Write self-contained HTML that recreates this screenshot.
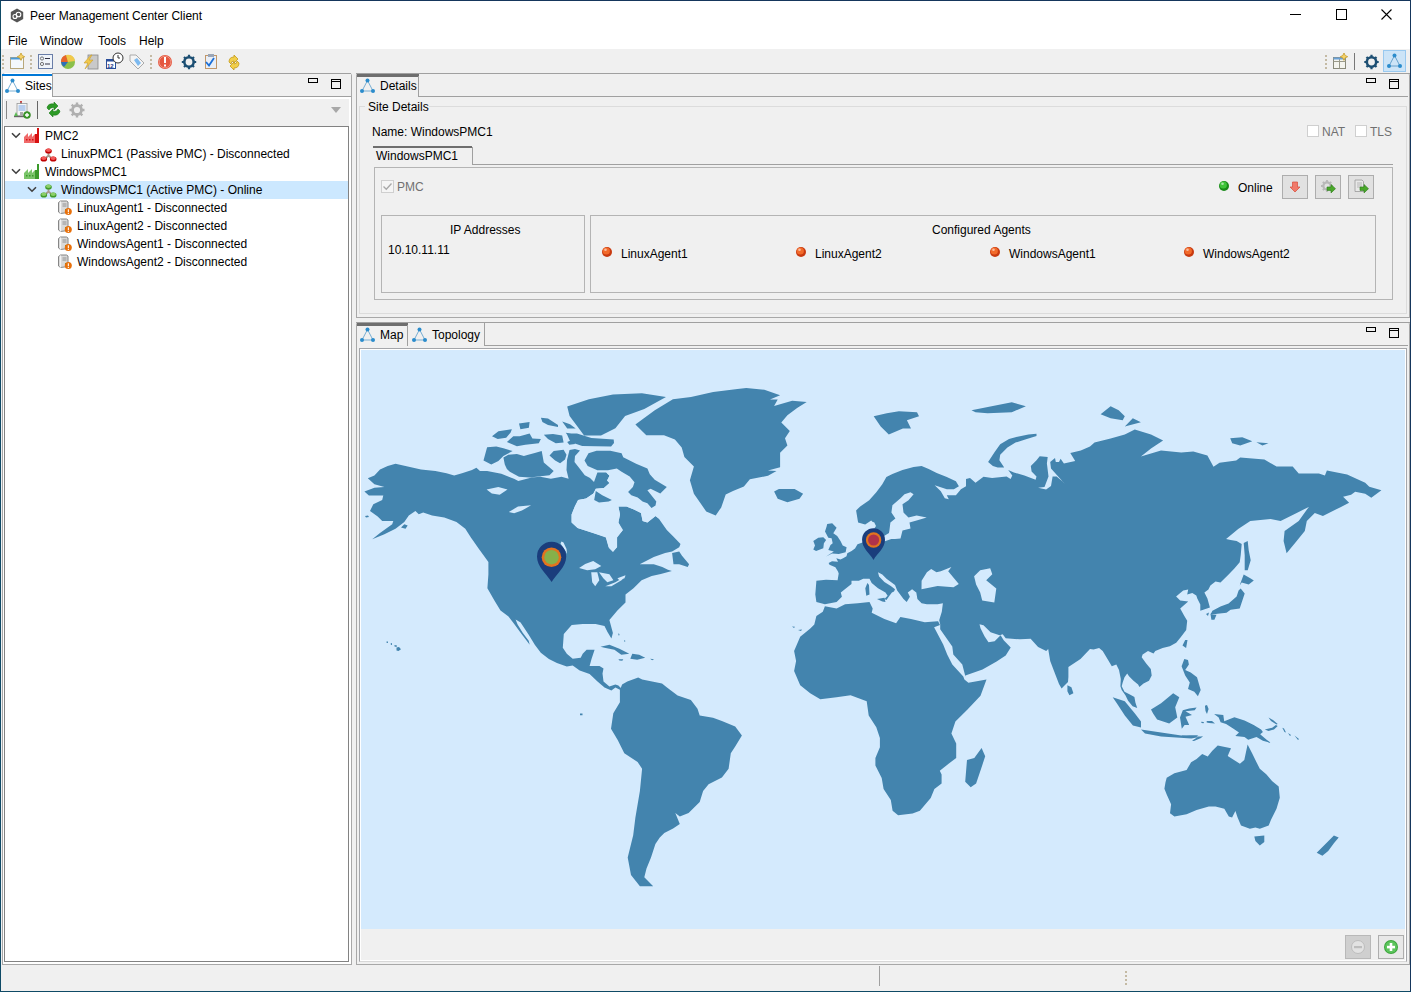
<!DOCTYPE html>
<html><head><meta charset="utf-8">
<style>
html,body{margin:0;padding:0;}
body{width:1411px;height:992px;position:relative;overflow:hidden;background:#f0f0f0;font-family:"Liberation Sans",sans-serif;font-size:12px;color:#000;}
.a{position:absolute;}
.t{position:absolute;white-space:nowrap;line-height:14px;}
.bx{position:absolute;box-sizing:border-box;}
svg{position:absolute;overflow:visible;}
</style></head><body>
<!-- window border -->
<div class="bx" style="left:0;top:0;width:1411px;height:992px;border:1px solid #15365c;border-left-color:#0f4a66;border-bottom-color:#0f4a66;z-index:50;pointer-events:none"></div>
<!-- title bar -->
<div class="a" style="left:0;top:0;width:1411px;height:30px;background:#fff"></div>
<svg style="left:10px;top:8px" width="14" height="15" viewBox="0 0 14 15"><polygon points="7,0.5 13.2,4 13.2,11 7,14.5 0.8,11 0.8,4" fill="#555"/><circle cx="5" cy="8.5" r="2" fill="none" stroke="#fff" stroke-width="1.1"/><circle cx="8.5" cy="6.5" r="2.3" fill="none" stroke="#fff" stroke-width="1.1"/></svg>
<div class="t" style="left:30px;top:9px">Peer Management Center Client</div>
<div class="a" style="left:1290px;top:14px;width:11px;height:1px;background:#000"></div>
<div class="bx" style="left:1336px;top:9px;width:11px;height:11px;border:1px solid #000"></div>
<svg style="left:1381px;top:9px" width="11" height="11"><path d="M0.5 0.5L10.5 10.5M10.5 0.5L0.5 10.5" stroke="#000" stroke-width="1.1"/></svg>
<!-- menu bar -->
<div class="a" style="left:0;top:30px;width:1411px;height:19px;background:#fff"></div>
<div class="t" style="left:8px;top:34px">File</div>
<div class="t" style="left:40px;top:34px">Window</div>
<div class="t" style="left:98px;top:34px">Tools</div>
<div class="t" style="left:139px;top:34px">Help</div>
<!-- toolbar -->

<svg style="left:0;top:50px" width="260" height="22">
 <g fill="#c4baa4"><rect x="2" y="5" width="2" height="2"/><rect x="2" y="9" width="2" height="2"/><rect x="2" y="13" width="2" height="2"/><rect x="2" y="17" width="2" height="2"/>
 <rect x="30" y="5" width="2" height="2"/><rect x="30" y="9" width="2" height="2"/><rect x="30" y="13" width="2" height="2"/><rect x="30" y="17" width="2" height="2"/>
 <rect x="150" y="5" width="2" height="2"/><rect x="150" y="9" width="2" height="2"/><rect x="150" y="13" width="2" height="2"/><rect x="150" y="17" width="2" height="2"/></g>
 <rect x="10.5" y="7.5" width="13" height="11" fill="#f4f8fc" stroke="#b8a77a"/><rect x="10.5" y="7.5" width="11" height="2" fill="#4a9ad8"/><path d="M21 3 l1.2 2.5 2.5 1.2 -2.5 1.2 -1.2 2.5 -1.2 -2.5 -2.5 -1.2 2.5 -1.2z" fill="#f6d36a" stroke="#c49a2a" stroke-width="0.8"/>
 <rect x="38.5" y="4.5" width="14" height="14" fill="#f0f4fa" stroke="#6a7ea8"/><circle cx="42" cy="8.5" r="1.6" fill="none" stroke="#666" stroke-width="0.9"/><circle cx="42" cy="14" r="1.6" fill="none" stroke="#666" stroke-width="0.9"/><path d="M45 8.5h5M45 14h5" stroke="#334" stroke-width="1"/>
 <circle cx="68" cy="12" r="7" fill="#8cc04a"/><path d="M68 12 L61 12 A7 7 0 0 1 66 5z" fill="#e8632a"/><path d="M68 12 L66 5 A7 7 0 0 1 75 11z" fill="#f2c94a"/><path d="M68 12 L61 12 A7 7 0 0 0 64 17z" fill="#2f6fb8"/>
 <rect x="88" y="5" width="10" height="14" fill="#c9c9c9" stroke="#888" stroke-width="0.8"/><path d="M91 5 L84 13 L88 13 L85 19 L93 10 L89 10 L92 5z" fill="#f1c84a" stroke="#c9a030" stroke-width="0.6"/>
 <rect x="106.5" y="9.5" width="9" height="9" fill="#fff" stroke="#2a4f9a"/><rect x="106.5" y="9.5" width="9" height="2" fill="#2a4f9a"/><text x="107" y="17.5" font-size="6" font-family="Liberation Sans" font-weight="bold" fill="#1a3a8a">12</text><circle cx="118" cy="8" r="5" fill="#fff" stroke="#333" stroke-width="1"/><path d="M118 5v3h2" stroke="#333" stroke-width="1" fill="none"/>
 <path d="M130 5 L136 5 L144 13 L138 19 L130 11z" fill="#f4f4f4" stroke="#aaa" stroke-width="1"/><path d="M134 10 L137 8 L141 13 L138 16z" fill="#7cb9ef"/>
 <circle cx="165" cy="12" r="7" fill="#e5573f"/><circle cx="165" cy="12" r="5.8" fill="none" stroke="#f5b3a6" stroke-width="0.6"/><rect x="164" y="7" width="2" height="6" fill="#fff"/><rect x="164" y="14.5" width="2" height="2" fill="#fff"/>
 <g transform="translate(189 12)"><circle r="4.7" fill="none" stroke="#1d4f73" stroke-width="2.6"/><g stroke="#1d4f73" stroke-width="2.2"><path d="M0 -7.2V-4M0 4V7.2M-7.2 0H-4M4 0H7.2M-5 -5L-3 -3M3 3L5 5M-5 5L-3 3M3 -3L5 -5"/></g></g>
 <rect x="205.5" y="5.5" width="11" height="13" fill="#e9eef6" stroke="#c0976a"/><rect x="208" y="4" width="6" height="3" fill="#9aa6b8"/><path d="M206 12 L209 15.5 L214 8" stroke="#1a6fd8" stroke-width="1.8" fill="none"/>
 <path d="M229 12 q0 -5 5 -5 l0 -2 4 4 -4 4 0 -2 q-3 0 -3 3z" fill="#f2cf4a" stroke="#c49a1a" stroke-width="0.8"/><path d="M239 13 q0 5 -5 5 l0 2 -4 -4 4 -4 0 2 q3 0 3 -3z" fill="#f2cf4a" stroke="#c49a1a" stroke-width="0.8"/>
</svg>
<svg style="left:1320px;top:50px" width="90" height="22">
 <g fill="#c4baa4"><rect x="5" y="5" width="2" height="2"/><rect x="5" y="9" width="2" height="2"/><rect x="5" y="13" width="2" height="2"/><rect x="5" y="17" width="2" height="2"/></g>
 <rect x="13.5" y="7.5" width="12" height="11" fill="#f4f4ee" stroke="#8a8a7a"/><path d="M13.5 11.5h12M19.5 7.5v11" stroke="#9a9a8a"/><rect x="13.5" y="7.5" width="12" height="2" fill="#6aa2d8"/><path d="M24 3 l1.2 2.5 2.5 1.2 -2.5 1.2 -1.2 2.5 -1.2 -2.5 -2.5 -1.2 2.5 -1.2z" fill="#f6d36a" stroke="#c49a2a" stroke-width="0.8"/>
 <rect x="34" y="3" width="1" height="17" fill="#777"/>
 <g transform="translate(51.5 12)"><circle r="4.7" fill="none" stroke="#1d4f73" stroke-width="2.6"/><g stroke="#1d4f73" stroke-width="2.2"><path d="M0 -7.2V-4M0 4V7.2M-7.2 0H-4M4 0H7.2M-5 -5L-3 -3M3 3L5 5M-5 5L-3 3M3 -3L5 -5"/></g></g>
 <rect x="63.5" y="0.5" width="22" height="21" fill="#cce4f7" stroke="#99c9ef"/>
 <g transform="translate(66 3)"><path d="M8.5 2.5 L3 13 L14 13z" fill="none" stroke="#5b9ac6" stroke-width="0.9"/><circle cx="8.5" cy="2.5" r="2" fill="#2b8ccc"/><circle cx="3" cy="13" r="2" fill="#2b8ccc"/><circle cx="14" cy="13" r="2" fill="#2b8ccc"/></g>
</svg>

<!-- LEFT PANEL -->
<div class="bx" style="left:2px;top:73px;width:350px;height:892px;border:1px solid #a8a8a8;border-top:none;border-radius:3px 3px 0 0;background:#fff"></div>
<div class="a" style="left:52px;top:73px;width:299px;height:1px;background:#a0a0a0"></div>
<div class="a" style="left:2px;top:74px;width:50px;height:2px;background:#0078d7"></div>
<div class="a" style="left:53px;top:74px;width:298px;height:22px;background:#f0f0f0"></div>
<div class="a" style="left:52px;top:74px;width:1px;height:23px;background:#a0a0a0"></div>
<div class="a" style="left:52px;top:96px;width:299px;height:1px;background:#a0a0a0"></div>
<div class="a" style="left:4px;top:99px;width:345px;height:27px;background:#f0f0f0"></div>
<svg style="left:4px;top:78px" width="17" height="16"><path d="M8.5 2.5 L3 13 L14 13z" fill="none" stroke="#6aa6cf" stroke-width="0.9"/><circle cx="8.5" cy="2.5" r="2" fill="#2b8ccc"/><circle cx="3" cy="13" r="2" fill="#2b8ccc"/><circle cx="14" cy="13" r="2" fill="#2b8ccc"/></svg>
<div class="t" style="left:25px;top:79px">Sites</div>
<div class="bx" style="left:331px;top:79px;width:10px;height:10px;border:1.5px solid #000"></div><div class="a" style="left:332px;top:81px;width:8px;height:1px;background:#000"></div>
<div class="bx" style="left:308px;top:78px;width:10px;height:5px;border:1.5px solid #000"></div>
<div class="a" style="left:6px;top:101px;width:1px;height:18px;background:#888"></div>
<div class="a" style="left:37px;top:101px;width:1px;height:18px;background:#666"></div>
<svg style="left:14px;top:101px" width="18" height="18">
 <rect x="3" y="2.5" width="10" height="12" fill="#f6f6f6" stroke="#999" stroke-width="0.8"/><rect x="6.5" y="0" width="1" height="2.5" fill="#444"/><circle cx="7" cy="0.8" r="0.9" fill="#e02020"/><path d="M4.5 5h7M4.5 7h7M4.5 9h7" stroke="#7aa6e6" stroke-width="1"/><rect x="6" y="11" width="3" height="4" fill="#aaa"/><path d="M0 15 L2 11 L4 15z" fill="#5dbb55"/><rect x="0" y="15" width="13" height="1.2" fill="#666"/><circle cx="13" cy="14" r="3.5" fill="#3a9a2a" stroke="#2a7a1a" stroke-width="0.5"/><path d="M13 12v4M11 14h4" stroke="#fff" stroke-width="1.4"/>
</svg>
<svg style="left:45px;top:101px" width="18" height="18">
 <path d="M2 7 Q3 2 9 3 L9 1 L13 5 L9 9 L9 6.5 Q5 6 4 9z" fill="#2d9a26" stroke="#1a7a16" stroke-width="0.6"/><path d="M15 10 Q14 15 8 14 L8 16 L4 12 L8 8 L8 10.5 Q12 11 13 8z" fill="#2d9a26" stroke="#1a7a16" stroke-width="0.6"/>
</svg>
<svg style="left:68px;top:101px" width="18" height="18">
 <g transform="translate(9 9)"><circle r="4.5" fill="none" stroke="#b0b0b0" stroke-width="2.8"/><g stroke="#b0b0b0" stroke-width="2.4"><path d="M0 -7.5V-4M0 4V7.5M-7.5 0H-4M4 0H7.5M-5.3 -5.3L-3 -3M3 3L5.3 5.3M-5.3 5.3L-3 3M3 -3L5.3 -5.3"/></g><circle r="1.8" fill="#eee"/></g>
</svg>
<svg style="left:331px;top:107px" width="10" height="6"><path d="M0 0 L10 0 L5 6z" fill="#a8a8a8"/></svg>
<!-- tree -->
<div class="bx" style="left:4px;top:126px;width:345px;height:836px;border:1px solid #828282;background:#fff"></div>
<div class="a" style="left:5px;top:181px;width:343px;height:18px;background:#cce8ff"></div>
<svg style="left:11px;top:132px" width="10" height="7"><path d="M1 1.2 L5 5.2 L9 1.2" fill="none" stroke="#404040" stroke-width="1.6"/></svg><svg style="left:24px;top:128px" width="16" height="16"><path d="M0 15 L0 9 L4 5 L4 9 L8 5 L8 9 L11 6 L11 15z" fill="#f06a6a"/><rect x="13" y="0" width="2" height="15" fill="#d81010"/><rect x="11" y="6" width="2" height="9" fill="#d81010"/><g fill="#d81010"><rect x="2" y="11" width="1.5" height="1.5"/><rect x="5" y="11" width="1.5" height="1.5"/><rect x="8" y="11" width="1.5" height="1.5"/></g></svg><div class="t" style="left:45px;top:129px">PMC2</div>
<svg style="left:39.5px;top:146px" width="17" height="16"><path d="M8.5 5 L8.5 9.5 L4 13.5 M8.5 9.5 L13 13.5" stroke="#a8988c" stroke-width="1.8" fill="none"/><ellipse cx="8.5" cy="5" rx="3.3" ry="2.6" fill="#c00000"/><ellipse cx="8.5" cy="4.2" rx="2.6" ry="1.8" fill="#f25a5a"/><ellipse cx="3.8" cy="13" rx="3.3" ry="2.6" fill="#c00000"/><ellipse cx="3.8" cy="12.2" rx="2.6" ry="1.8" fill="#f25a5a"/><ellipse cx="13.2" cy="13" rx="3.3" ry="2.6" fill="#c00000"/><ellipse cx="13.2" cy="12.2" rx="2.6" ry="1.8" fill="#f25a5a"/></svg><div class="t" style="left:61px;top:147px">LinuxPMC1 (Passive PMC) - Disconnected</div>
<svg style="left:11px;top:168px" width="10" height="7"><path d="M1 1.2 L5 5.2 L9 1.2" fill="none" stroke="#404040" stroke-width="1.6"/></svg><svg style="left:24px;top:164px" width="16" height="16"><path d="M0 15 L0 9 L4 5 L4 9 L8 5 L8 9 L11 6 L11 15z" fill="#7ac46a"/><rect x="13" y="0" width="2" height="15" fill="#3a9a2a"/><rect x="11" y="6" width="2" height="9" fill="#3a9a2a"/><g fill="#3a9a2a"><rect x="2" y="11" width="1.5" height="1.5"/><rect x="5" y="11" width="1.5" height="1.5"/><rect x="8" y="11" width="1.5" height="1.5"/></g></svg><div class="t" style="left:45px;top:165px">WindowsPMC1</div>
<svg style="left:27px;top:186px" width="10" height="7"><path d="M1 1.2 L5 5.2 L9 1.2" fill="none" stroke="#404040" stroke-width="1.6"/></svg><svg style="left:39.5px;top:182px" width="17" height="16"><path d="M8.5 5 L8.5 9.5 L4 13.5 M8.5 9.5 L13 13.5" stroke="#a8988c" stroke-width="1.8" fill="none"/><ellipse cx="8.5" cy="5" rx="3.3" ry="2.6" fill="#3f9a2a"/><ellipse cx="8.5" cy="4.2" rx="2.6" ry="1.8" fill="#8ccf6a"/><ellipse cx="3.8" cy="13" rx="3.3" ry="2.6" fill="#3f9a2a"/><ellipse cx="3.8" cy="12.2" rx="2.6" ry="1.8" fill="#8ccf6a"/><ellipse cx="13.2" cy="13" rx="3.3" ry="2.6" fill="#3f9a2a"/><ellipse cx="13.2" cy="12.2" rx="2.6" ry="1.8" fill="#8ccf6a"/></svg><div class="t" style="left:61px;top:183px">WindowsPMC1 (Active PMC) - Online</div>
<svg style="left:56px;top:199px" width="16" height="16"><path d="M2.5 3.5 L4.5 2 L10.5 2 L12 3 L12 13.5 L4.5 14.5 L2.5 13z" fill="#d9d9d9" stroke="#7a7a7a" stroke-width="0.9"/><path d="M4.5 2.5 L4.5 14.5" stroke="#f4f4f4" stroke-width="1.2"/><path d="M6.5 5h4M6.5 7h4" stroke="#8a8a8a" stroke-width="0.9"/><rect x="9" y="10" width="1.5" height="1.2" fill="#3cae3c"/><circle cx="12.3" cy="12.6" r="3.5" fill="#e8700a"/><rect x="11.8" y="10.3" width="1.1" height="2.9" fill="#fff"/><rect x="11.8" y="13.9" width="1.1" height="1.1" fill="#fff"/></svg><div class="t" style="left:77px;top:201px">LinuxAgent1 - Disconnected</div>
<svg style="left:56px;top:217px" width="16" height="16"><path d="M2.5 3.5 L4.5 2 L10.5 2 L12 3 L12 13.5 L4.5 14.5 L2.5 13z" fill="#d9d9d9" stroke="#7a7a7a" stroke-width="0.9"/><path d="M4.5 2.5 L4.5 14.5" stroke="#f4f4f4" stroke-width="1.2"/><path d="M6.5 5h4M6.5 7h4" stroke="#8a8a8a" stroke-width="0.9"/><rect x="9" y="10" width="1.5" height="1.2" fill="#3cae3c"/><circle cx="12.3" cy="12.6" r="3.5" fill="#e8700a"/><rect x="11.8" y="10.3" width="1.1" height="2.9" fill="#fff"/><rect x="11.8" y="13.9" width="1.1" height="1.1" fill="#fff"/></svg><div class="t" style="left:77px;top:219px">LinuxAgent2 - Disconnected</div>
<svg style="left:56px;top:235px" width="16" height="16"><path d="M2.5 3.5 L4.5 2 L10.5 2 L12 3 L12 13.5 L4.5 14.5 L2.5 13z" fill="#d9d9d9" stroke="#7a7a7a" stroke-width="0.9"/><path d="M4.5 2.5 L4.5 14.5" stroke="#f4f4f4" stroke-width="1.2"/><path d="M6.5 5h4M6.5 7h4" stroke="#8a8a8a" stroke-width="0.9"/><rect x="9" y="10" width="1.5" height="1.2" fill="#3cae3c"/><circle cx="12.3" cy="12.6" r="3.5" fill="#e8700a"/><rect x="11.8" y="10.3" width="1.1" height="2.9" fill="#fff"/><rect x="11.8" y="13.9" width="1.1" height="1.1" fill="#fff"/></svg><div class="t" style="left:77px;top:237px">WindowsAgent1 - Disconnected</div>
<svg style="left:56px;top:253px" width="16" height="16"><path d="M2.5 3.5 L4.5 2 L10.5 2 L12 3 L12 13.5 L4.5 14.5 L2.5 13z" fill="#d9d9d9" stroke="#7a7a7a" stroke-width="0.9"/><path d="M4.5 2.5 L4.5 14.5" stroke="#f4f4f4" stroke-width="1.2"/><path d="M6.5 5h4M6.5 7h4" stroke="#8a8a8a" stroke-width="0.9"/><rect x="9" y="10" width="1.5" height="1.2" fill="#3cae3c"/><circle cx="12.3" cy="12.6" r="3.5" fill="#e8700a"/><rect x="11.8" y="10.3" width="1.1" height="2.9" fill="#fff"/><rect x="11.8" y="13.9" width="1.1" height="1.1" fill="#fff"/></svg><div class="t" style="left:77px;top:255px">WindowsAgent2 - Disconnected</div>

<!-- DETAILS PANEL -->
<div class="bx" style="left:356px;top:73px;width:1054px;height:245px;border:1px solid #a8a8a8;border-top:none;border-radius:3px 3px 0 0"></div>
<div class="a" style="left:356px;top:73px;width:1054px;height:1px;background:#a0a0a0"></div>
<div class="a" style="left:357px;top:74px;width:62px;height:3px;background:#6e6e6e"></div>
<div class="a" style="left:357px;top:77px;width:61px;height:20px;background:#f0f0f0"></div>
<div class="a" style="left:418px;top:76px;width:1px;height:21px;background:#a0a0a0"></div>
<div class="a" style="left:418px;top:96px;width:990px;height:1px;background:#a0a0a0"></div>
<svg style="left:359px;top:78px" width="17" height="16"><path d="M8.5 2.5 L3 13 L14 13z" fill="none" stroke="#6aa6cf" stroke-width="0.9"/><circle cx="8.5" cy="2.5" r="2" fill="#2b8ccc"/><circle cx="3" cy="13" r="2" fill="#2b8ccc"/><circle cx="14" cy="13" r="2" fill="#2b8ccc"/></svg>
<div class="t" style="left:380px;top:79px">Details</div>
<div class="bx" style="left:1366px;top:78px;width:10px;height:5px;border:1.5px solid #000"></div>
<div class="bx" style="left:1389px;top:79px;width:10px;height:10px;border:1.5px solid #000"></div><div class="a" style="left:1390px;top:81px;width:8px;height:1px;background:#000"></div>
<!-- group box -->
<div class="bx" style="left:359px;top:106px;width:1048px;height:208px;border:1px solid #dcdcdc"></div>
<div class="a" style="left:365px;top:100px;width:64px;height:12px;background:#f0f0f0"></div>
<div class="t" style="left:368px;top:100px">Site Details</div>
<div class="t" style="left:372px;top:125px">Name: WindowsPMC1</div>
<div class="bx" style="left:1307px;top:125px;width:12px;height:12px;border:1px solid #cfcfcf;background:#fff"></div>
<div class="t" style="left:1322px;top:125px;color:#707070">NAT</div>
<div class="bx" style="left:1355px;top:125px;width:12px;height:12px;border:1px solid #cfcfcf;background:#fff"></div>
<div class="t" style="left:1370px;top:125px;color:#707070">TLS</div>
<!-- inner tab -->
<div class="a" style="left:373px;top:146px;width:99px;height:2px;background:#6e6e6e"></div>
<div class="a" style="left:472px;top:147px;width:1px;height:18px;background:#a0a0a0"></div>
<div class="a" style="left:472px;top:164px;width:921px;height:1px;background:#a0a0a0"></div>
<div class="t" style="left:376px;top:149px">WindowsPMC1</div>
<div class="bx" style="left:374px;top:167px;width:1019px;height:133px;border:1px solid #b4b4b4"></div>
<div class="bx" style="left:381px;top:180px;width:13px;height:13px;border:1px solid #cfcfcf;background:#f5f5f5"></div>
<svg style="left:382px;top:181px" width="11" height="11"><path d="M1.5 5.5 L4.3 8.3 L9.5 2.5" stroke="#a8a8a8" stroke-width="1.3" fill="none"/></svg>
<div class="t" style="left:397px;top:180px;color:#707070">PMC</div>
<svg style="left:1218px;top:180px" width="12" height="12"><defs></defs><circle cx="6" cy="6" r="5" fill="#1a8a1a"/><circle cx="5.3" cy="5" r="3.6" fill="#3fc43a"/><circle cx="4.5" cy="3.8" r="1.3" fill="#fff" opacity="0.55"/></svg>
<div class="t" style="left:1238px;top:181px">Online</div>
<div class="bx" style="left:1282px;top:175px;width:26px;height:24px;border:1px solid #adadad;background:#e1e1e1"></div>
<svg style="left:1288px;top:180px" width="14" height="14"><path d="M4.5 2 h5 v5 h2.5 l-5 5 l-5 -5 h2.5z" fill="#f07a6a" stroke="#d84a3a" stroke-width="0.7"/></svg>
<div class="bx" style="left:1315px;top:175px;width:26px;height:24px;border:1px solid #adadad;background:#e1e1e1"></div>
<svg style="left:1318px;top:178px" width="20" height="18"><g transform="translate(9 8)"><circle r="3.6" fill="none" stroke="#b8b8b8" stroke-width="2.2"/><g stroke="#b8b8b8" stroke-width="1.8"><path d="M0 -6V-3.5M0 3.5V6M-6 0H-3.5M3.5 0H6M-4.2 -4.2L-2.5 -2.5M2.5 2.5L4.2 4.2M-4.2 4.2L-2.5 2.5M2.5 -2.5L4.2 -4.2"/></g></g><path d="M9 9 h4 v-2.5 l4.5 4.2 -4.5 4.2 v-2.5 h-4z" fill="#4aa82a" stroke="#2a7a1a" stroke-width="0.6"/></svg>
<div class="bx" style="left:1348px;top:175px;width:26px;height:24px;border:1px solid #adadad;background:#e1e1e1"></div>
<svg style="left:1351px;top:178px" width="20" height="18"><path d="M4 2 h7 l1.5 1.5 v10 h-8.5z" fill="#e8e8e8" stroke="#999" stroke-width="0.8"/><path d="M6 5h5M6 7h5M6 9h5" stroke="#aaa" stroke-width="0.8"/><path d="M9 9 h4 v-2.5 l4.5 4.2 -4.5 4.2 v-2.5 h-4z" fill="#4aa82a" stroke="#2a7a1a" stroke-width="0.6"/></svg>
<!-- IP box -->
<div class="bx" style="left:381px;top:215px;width:204px;height:78px;border:1px solid #b4b4b4"></div>
<div class="t" style="left:450px;top:223px">IP Addresses</div>
<div class="t" style="left:388px;top:243px">10.10.11.11</div>
<div class="bx" style="left:590px;top:215px;width:786px;height:78px;border:1px solid #b4b4b4"></div>
<div class="t" style="left:932px;top:223px">Configured Agents</div>
<svg style="left:601px;top:246px" width="12" height="12"><defs></defs><circle cx="6" cy="6" r="5" fill="#c83a10"/><circle cx="5.3" cy="5" r="3.6" fill="#f26a2a"/><circle cx="4.5" cy="3.8" r="1.3" fill="#fff" opacity="0.55"/></svg><div class="t" style="left:621px;top:247px">LinuxAgent1</div>
<svg style="left:795px;top:246px" width="12" height="12"><defs></defs><circle cx="6" cy="6" r="5" fill="#c83a10"/><circle cx="5.3" cy="5" r="3.6" fill="#f26a2a"/><circle cx="4.5" cy="3.8" r="1.3" fill="#fff" opacity="0.55"/></svg><div class="t" style="left:815px;top:247px">LinuxAgent2</div>
<svg style="left:989px;top:246px" width="12" height="12"><defs></defs><circle cx="6" cy="6" r="5" fill="#c83a10"/><circle cx="5.3" cy="5" r="3.6" fill="#f26a2a"/><circle cx="4.5" cy="3.8" r="1.3" fill="#fff" opacity="0.55"/></svg><div class="t" style="left:1009px;top:247px">WindowsAgent1</div>
<svg style="left:1183px;top:246px" width="12" height="12"><defs></defs><circle cx="6" cy="6" r="5" fill="#c83a10"/><circle cx="5.3" cy="5" r="3.6" fill="#f26a2a"/><circle cx="4.5" cy="3.8" r="1.3" fill="#fff" opacity="0.55"/></svg><div class="t" style="left:1203px;top:247px">WindowsAgent2</div>

<!-- MAP PANEL -->
<div class="bx" style="left:356px;top:322px;width:1054px;height:643px;border:1px solid #a8a8a8;border-top:none;border-radius:3px 3px 0 0"></div>
<div class="a" style="left:356px;top:322px;width:1054px;height:1px;background:#a0a0a0"></div>
<div class="a" style="left:357px;top:323px;width:51px;height:3px;background:#6e6e6e"></div>
<div class="a" style="left:407px;top:325px;width:1px;height:21px;background:#a0a0a0"></div>
<div class="a" style="left:484px;top:323px;width:1px;height:23px;background:#a0a0a0"></div>
<div class="a" style="left:484px;top:345px;width:924px;height:1px;background:#a0a0a0"></div>
<svg style="left:359px;top:327px" width="17" height="16"><path d="M8.5 2.5 L3 13 L14 13z" fill="none" stroke="#6aa6cf" stroke-width="0.9"/><circle cx="8.5" cy="2.5" r="2" fill="#2b8ccc"/><circle cx="3" cy="13" r="2" fill="#2b8ccc"/><circle cx="14" cy="13" r="2" fill="#2b8ccc"/></svg><div class="t" style="left:380px;top:328px">Map</div>
<svg style="left:411px;top:327px" width="17" height="16"><path d="M8.5 2.5 L3 13 L14 13z" fill="none" stroke="#6aa6cf" stroke-width="0.9"/><circle cx="8.5" cy="2.5" r="2" fill="#2b8ccc"/><circle cx="3" cy="13" r="2" fill="#2b8ccc"/><circle cx="14" cy="13" r="2" fill="#2b8ccc"/></svg><div class="t" style="left:432px;top:328px">Topology</div>
<div class="bx" style="left:1366px;top:327px;width:10px;height:5px;border:1.5px solid #000"></div>
<div class="bx" style="left:1389px;top:328px;width:10px;height:10px;border:1.5px solid #000"></div><div class="a" style="left:1390px;top:330px;width:8px;height:1px;background:#000"></div>
<div class="bx" style="left:359px;top:348px;width:1048px;height:614px;border:1px solid #a4a6aa;border-bottom-color:#d8d8d8;background:#fff"></div><div class="a" style="left:361px;top:350px;width:1044px;height:610px;background:#f0f0f0"></div>
<div class="a" id="mapbg" style="left:361px;top:350px;width:1044px;height:579px;background:#d4eafd;overflow:hidden">
<svg id="world" style="left:0;top:0" width="1044" height="579" viewBox="361 350 1044 579"><g id="land"><path fill="#4384ae" d="M367.8 478.2 L374.4 475.5 L380 469.4 L387.7 466.1 L395.5 463.8 L407.7 466.6 L421 469.4 L435.4 471 L446.5 473.3 L454.2 475.5 L462 473.3 L472 469.9 L476.4 467.7 L480 471 L487.1 471 L501.3 473.8 L514 478.8 L518.3 480.9 L531.7 477.4 L540.2 476.7 L550.9 478.8 L561.5 476.7 L568.6 478.8 L566.5 470 L567 460 L569.5 450 L575 449 L580 450.5 L575 456 L574.5 462 L579.6 468.6 L584.8 475.2 L590 478 L594 482 L597.4 472.6 L606.3 472.6 L609.5 475.8 L607.1 480.6 L609.5 483.1 L603.9 487.9 L595.8 488.7 L593.4 493.5 L586.1 498.4 L578.1 500 L574.8 506.5 L571.6 514.5 L571.6 522.6 L577.6 528 L593 533 L606 537 L609 548 L613 552 L617 547 L617 537 L623 530 L618.4 522.6 L620 514.5 L618.4 506.5 L626.5 506.5 L634.5 509.7 L641 512.9 L642.6 521 L647.4 522.6 L655.5 516.1 L658.7 518.5 L666.8 530 L673.3 536.6 L680.5 543.9 L679.2 547.3 L672.1 551.5 L665.1 552.9 L653.8 557.1 L639.7 564.2 L653.8 564.2 L662.3 567 L667.9 569.8 L671.9 571 L660.8 574.1 L651.7 576 L641.6 580.2 L633.5 588.3 L625.5 594.4 L625.5 602.4 L617.4 610.5 L609.4 620 L612.9 632.9 L611.4 638.4 L607.5 631.9 L604.5 626 L595.6 624 L582.7 624 L571.7 625 L563.8 633.9 L562.8 647.8 L566.8 653.7 L572.7 658.7 L580.7 657.7 L582.7 653.7 L586.6 649.8 L594.6 649.8 L591.6 658.7 L589.6 666.1 L599.5 666.1 L603.5 668.6 L602.5 673.6 L603.5 681.5 L609.4 686.5 L615.4 684.5 L618.4 685.5 L621.3 688.5 L622.5 691.4 L619.4 689.4 L615.4 687.5 L611.4 690.4 L604.5 687.5 L597.5 681.5 L589.6 674.1 L579.7 670.6 L572.7 665.6 L566.8 666.6 L556.9 662.9 L548.9 658.9 L540.8 652.8 L534.8 644.8 L528.7 634.7 L520.6 622.6 L515.6 619.6 L517.6 624.6 L522.7 632.7 L528.7 640.7 L529.7 644.8 L526.7 640.7 L520.6 632.7 L514.6 624.6 L508.5 616.5 L500.5 610.5 L494.4 600.4 L487.4 588.3 L488.4 574.2 L488.4 562.1 L478.6 548.6 L470.9 537.6 L465.3 528.7 L456.5 522 L444.3 517.6 L432.1 515.4 L423.2 512.6 L418.8 514.3 L415.4 511 L408.8 515.4 L404.3 522 L395.5 528.7 L384.4 534.2 L372.2 539.2 L380 533.1 L392.2 524.3 L393.3 520.9 L382.2 520.9 L377.7 516.5 L370 511 L373.3 504.3 L382.2 499.9 L383.3 495.4 L368.9 495.4 L364.4 491.6 L374.4 487.7 L384.4 487.1 L374.4 484.3Z M622.1 684.4 L627.3 681.5 L638.2 677.5 L642.2 679.5 L662 683.5 L667 687.5 L677.6 695.5 L690.9 700 L697.5 708.8 L699.7 715.5 L713 717.7 L721.9 721 L735.2 726.6 L741.9 735.4 L735.2 746.5 L730.8 753.2 L728.6 768.7 L721.9 777.6 L708.6 784.2 L703.1 790.9 L699.7 802 L688.6 813 L679.8 816.4 L675.3 813 L679.8 824.1 L673.1 828.6 L664.3 833 L659.8 837.4 L655.4 844.1 L651 857.4 L646.5 868.5 L644.3 877.3 L653.2 886.2 L639.9 886.2 L631 875.1 L627.7 857.4 L633.2 835.2 L635.4 817.5 L639.9 790.9 L642.1 768.7 L637.6 762 L624.3 753.2 L617.7 739.9 L611 728.8 L613.3 713.3 L619.9 702.2 L619.9 690Z M824.9 604.2 L816.4 602.1 L815.3 594.6 L816.4 580.8 L826 579.8 L837.6 580.3 L838.7 573.4 L838 571.5 L835.4 567.2 L829.5 564.7 L828.6 563 L832 561.3 L838 561.7 L836.3 558.3 L840.5 559.6 L843.1 558.3 L846.5 556.2 L847.3 553.2 L851.6 551.1 L855 548.5 L857.5 544.3 L864 542 L870 532 L874.3 523.5 L871.2 520.5 L865.2 524.5 L858.1 522.5 L856.1 510.4 L860.2 506.4 L869.2 500.3 L876.3 492.2 L882.3 484.2 L886.4 477.1 L892.4 474.1 L902.5 470.1 L913.6 467.1 L921.6 466 L928.7 469.1 L936.7 473.1 L946.8 477.1 L955.9 481.2 L958.9 486.2 L953.9 489.2 L946.8 489.2 L934.7 485.2 L940.8 491.2 L944.8 498.3 L948.8 499.3 L946.8 495.3 L955.9 495.3 L960.9 489.2 L966 486.2 L966 479.1 L970 478.1 L975.5 482.8 L983.5 476.8 L992.1 478.1 L1006.6 476.5 L1010.6 478.9 L1012.3 475.6 L1008.2 470 L1013.9 472.4 L1024.4 475.6 L1035.6 479.7 L1036.5 476.5 L1031.6 471.6 L1030.8 466 L1036.5 460.3 L1039.7 456.3 L1047.7 457.1 L1046.9 463.5 L1048.5 476.5 L1044.5 486.9 L1038.1 487.7 L1046.1 489.4 L1051 486.1 L1052.6 476.5 L1056.6 476.5 L1062.3 481.3 L1064.7 483.7 L1058.2 476.5 L1051 468.4 L1050.2 461.9 L1055 457.9 L1055.8 461.9 L1059 461.9 L1060.6 458.7 L1063.9 463.5 L1075.2 461.1 L1070.3 453.1 L1080.8 450.6 L1090 446.6 L1094.5 442.5 L1110.6 438.5 L1124.8 434.4 L1134.8 429.4 L1151 434.4 L1163.1 440.5 L1151 448.5 L1140.9 456.6 L1161 450.6 L1181.2 452.6 L1193.3 451.6 L1207.4 455.6 L1213.5 466.7 L1219.5 462.7 L1236.2 460.5 L1240.2 457.5 L1264.4 459.5 L1276.5 466.5 L1292.7 466.5 L1298.7 473.6 L1318.9 473.6 L1324.9 475.6 L1326.9 470.6 L1347.1 474.6 L1365.2 482.7 L1369.3 486.7 L1381.4 490.3 L1371.3 497.8 L1365.2 493.8 L1355.2 491.7 L1351.1 494.8 L1343.1 496.8 L1349.1 502.8 L1341 506.9 L1322.9 515.9 L1314.8 512.9 L1306.8 521 L1304.8 531 L1296.7 541.1 L1286.6 553.2 L1283.6 541.1 L1284.6 531 L1298.7 521 L1308.8 506.9 L1296.7 512.9 L1280.6 521 L1270.5 519 L1250.3 521 L1238.2 529 L1226.1 539.1 L1230.6 540.1 L1236.6 541.1 L1241.7 544.1 L1240.7 555.2 L1239.7 562.3 L1234.6 568.3 L1228.6 574.4 L1220.5 582.4 L1215.5 581.4 L1210.4 585.5 L1208.4 589.5 L1204.4 592.5 L1207.4 598.6 L1209.9 607.6 L1200.3 610.7 L1200.3 604.6 L1197.3 598.6 L1196.3 595.5 L1192.3 593 L1187.2 594.5 L1188.2 589.5 L1183.2 590.5 L1176.1 596.5 L1180.2 600.6 L1188.2 601.6 L1180.2 608.6 L1184.2 615.7 L1187.2 620.7 L1186.2 630 L1180.7 637.3 L1176.2 642.7 L1169.8 646.3 L1162.6 648.1 L1155.3 650.9 L1153.5 653.6 L1148 650.9 L1142.6 654.5 L1141.7 657.2 L1146.2 663.6 L1150.8 669 L1151.7 675.4 L1149 680.8 L1143.5 683.5 L1139.4 687.1 L1138.1 684.4 L1133.5 680.8 L1129 676.3 L1127.2 673.5 L1124.5 677.2 L1122.7 682.6 L1121.7 686.2 L1124.5 691.7 L1129.9 694.4 L1134.4 697.1 L1135.4 702.6 L1137.2 708 L1132.6 706.2 L1128.1 700.7 L1125.4 695.3 L1121.7 689.9 L1120.4 686.2 L1120.8 679 L1119 669.9 L1116.3 664.5 L1111.8 666.3 L1108.1 659.9 L1102.7 650.9 L1099.1 648.1 L1093.6 649.5 L1090 649 L1080.5 659 L1068.4 667 L1068.4 677.1 L1068 682 L1064 686 L1061.6 688.6 L1059 684 L1054 671 L1050.2 661 L1048.2 648.9 L1046.2 650.9 L1038.1 646.9 L1030.6 638.8 L1020 639.3 L1005.7 638.3 L1002.7 634.3 L999.6 635.3 L990.6 632.3 L983.5 625.2 L979.5 624.2 L980.5 628.2 L984.5 636.3 L988.5 642.3 L994.6 641.3 L1000.6 635.3 L1003.7 640.3 L1010.7 647.4 L1005.7 655.4 L996.6 661.5 L982.5 669.6 L965.4 675.6 L965.4 676.6 L962.3 664.5 L953.3 654.4 L952.3 646.4 L940.2 629.2 L940.2 624.2 L939.2 620.2 L941.8 611.7 L942.9 603.2 L937.6 604.2 L926.9 604.2 L921.6 603.2 L917.4 598.9 L916.3 592.5 L912.1 589.3 L907.8 592.5 L909.9 596.8 L906.7 602.1 L903.5 598.9 L897.2 590.4 L895 585.1 L886.5 578.7 L882.3 574.5 L878 572.3 L879.1 576.6 L884.4 581.9 L890.8 586.1 L895 589.3 L894 591.5 L891.9 592.5 L888.7 596.8 L886.5 600 L884.4 598.9 L887.6 595.7 L885.5 592.5 L878 588.3 L871.7 583 L869.5 578.7 L863.2 578.7 L858.9 580.8 L851.5 580.8 L851.5 584 L846.1 588.3 L840.8 592.5 L841.9 596.8 L836.6 602.1Z M824.9 606.3 L836.6 608.5 L845.1 604.2 L857.8 603.2 L869.5 602.1 L872.7 608.5 L871.7 612.7 L884.4 619.1 L896.1 623.3 L900.4 617 L911 619.1 L924.8 622.3 L937.6 621.2 L938.1 621.2 L940 625 L934.1 627.2 L943.2 644.4 L947.2 654.4 L952.3 664.5 L963.3 676.6 L964.4 679.6 L968.4 682.7 L986.5 679.6 L980.5 695.8 L967.5 709.4 L955.4 721.5 L951.4 733.5 L956.2 743.6 L956.2 758.1 L948.9 763.6 L939.8 770.8 L941.6 774.4 L941.6 783.5 L934.4 789 L930.7 798 L919.9 810.7 L912.6 813.5 L898.1 815.3 L892.6 810.7 L890.8 799.9 L883.6 789 L881.7 778.1 L875.4 765.4 L875.4 758.1 L879.9 747.2 L879.9 738.1 L876.3 727.3 L868.7 715.4 L866.7 701.3 L850.6 695.2 L836.5 697.3 L820.3 699.3 L810.2 693.2 L800.2 685.2 L794.1 671 L796.1 661 L794.1 650.9 L800.2 636.8 L810 628.7 L814.3 624.4 L816.4 615.9 L822.8 611.7Z M1166.7 777.7 L1174.4 773.3 L1186.6 770 L1191.1 762.2 L1196.6 758.9 L1202.2 753.9 L1207.7 756.6 L1212.1 751.1 L1217.7 745.5 L1231 748.3 L1227.7 756.1 L1239.9 763.8 L1244.3 760 L1247.6 744.4 L1252.1 753.3 L1256.5 762.2 L1259.8 768.8 L1266.5 774.4 L1272 781 L1278.7 786.6 L1279.8 797.7 L1276.5 808.8 L1270.9 819.9 L1268.7 825.4 L1259.8 828.7 L1255.4 827.6 L1249.9 828.7 L1241 825.4 L1237.6 817.6 L1235.4 811 L1232.1 817.6 L1228.8 816.5 L1224.3 808.8 L1215.5 806.6 L1208.8 806.6 L1196.6 809.9 L1186.6 814.3 L1174.4 816.5 L1170 813.2 L1171.1 804.3 L1166.7 794.4 L1164.4 788.8 L1165.5 782.2Z M635.4 424.5 L654.8 410.2 L672.9 399.2 L691 397.1 L713.2 392.1 L737.4 389.1 L746.3 388 L764.4 389.8 L780.1 395.3 L770 399.5 L777.7 399.5 L774.1 406 L792.2 400.7 L806.7 401.9 L797.1 408 L787.4 415.2 L781.3 422.5 L789.8 431 L785 438.2 L787.4 445.5 L780.1 452.7 L780.1 467.2 L768 470.5 L776.5 470.9 L768 475.7 L749.9 479.3 L743.9 486.6 L733 491 L725.7 494.5 L721.2 507.4 L715.7 515.6 L706.2 511.5 L700.7 503.4 L693.9 493.8 L689.9 480.2 L693.9 466.6 L684.4 457.1 L681.7 447.6 L674.9 439.4 L664 435.3 L646.3 435.3Z M487.1 447.2 L496.3 446.5 L503.4 448.3 L512.6 451.1 L503.4 456.1 L498.4 461.1 L491.3 464.6 L483.5 460.4Z M503.4 457.5 L508.3 454.7 L516.9 454 L523.9 456.1 L528.2 454.7 L533.9 453.3 L541.7 451.1 L542.4 454.7 L543.8 462.5 L553.7 471 L549.5 475.2 L529.6 477.4 L519 476.7 L509.8 471.7 L506.9 468.9 L504.8 464.6Z M549.5 455.4 L553.7 451.1 L563.6 449.7 L566.5 454.7 L565 459.6 L560.1 463.2 L555.1 460.4Z M492 436.3 L498.4 431.3 L511.9 429.2 L510.5 432.7 L506.2 437.7 L497.7 439.1Z M506.9 441.9 L513.3 436.3 L519.7 436.3 L529.6 433.4 L532.4 438.4 L540.9 439.1 L538.8 443.3 L525.4 444.8 L516.9 446.2 L509.8 443.3Z M519 423.5 L529.6 422.1 L528.9 427.8 L520.4 429.2Z M540.9 417.8 L548 418.5 L558 424.9 L558 427 L548 424.9 L542.4 422.1Z M543.8 434.8 L553 434.1 L562.2 435.6 L563.6 442.6 L555.8 443.3 L548 439.1Z M562.2 421.4 L570 424.2 L575.7 428.5 L567.2 428.5Z M565.8 432.7 L575 434.1 L574.3 436.3 L567.2 434.8Z M567.2 441.9 L572.1 439.8 L575 444.1 L569.3 444.8Z M566.5 433.3 L577 433.5 L591.4 438 L613.7 439.5 L614 443 L611.1 446.4 L582.2 446 L570.4 442Z M567.2 406.5 L588.9 399.3 L613 394.5 L641.9 393.3 L666 396.9 L644.3 408.9 L625.1 416.1 L615.4 428.2 L601 435.4 L584.1 435.4 L576.9 425.8 L569.6 416.1Z M774.1 491.4 L778.9 489 L794.6 489 L803.1 493.8 L799.5 498.7 L787.4 502.3 L777.7 498.7Z M873.7 416.3 L886.8 413.3 L898.9 411.3 L917 412.3 L919 416.3 L906.9 420.3 L911 428.4 L902.9 428.4 L888.8 434.4 L880.7 426.4Z M971.5 410.2 L991.6 406.2 L1011.8 402.2 L1025.9 406.2 L1011.8 412.3 L987.6 413.3 L975.5 412.3Z M988.1 461.9 L994.5 452.3 L1000.2 444.2 L1009 439 L1016.3 436.9 L1028.4 434.5 L1036.5 433.7 L1036.5 436.1 L1025.2 439.4 L1015.5 442.6 L1007.4 447.4 L1000.2 454.7 L999.4 460.3 L1004.2 467.6 L997.7 467.6 L992.9 466Z M1100.6 414.3 L1110.6 406.2 L1118.7 410.2 L1124.8 416.3 L1122.7 420.3 L1110.6 418.3Z M1124.8 426.4 L1132.8 418.3 L1140.9 422.3Z M1230.2 438.3 L1242.3 437.3 L1252.3 441.3 L1240.2 445.4 L1232.2 443.3Z M1256.4 442.3 L1268.5 443.3 L1262.4 445.4Z M827.2 523.9 L832.2 523.3 L836.6 527.7 L833.3 533.3 L837.2 536.1 L840.5 541.1 L842.7 545.5 L846.6 547.2 L845.6 552.3 L838.8 554 L832 553.6 L826.1 556.6 L833.8 551.6 L828.3 549.9 L830.5 544.9 L832.7 543.3 L831.6 538.3 L828.3 537.7 L825 531.6 L826.6 526.6Z M813.3 541.1 L818.3 537.7 L823.3 537.2 L826.1 540 L823.9 543.3 L823.3 548.3 L816.1 551 L813.3 549.4 L815 545.5Z M877 598.9 L884.4 597.8 L885.5 602.1 L882.3 601.6Z M867.4 583 L869 585.1 L869.5 594.6 L866.3 595.7 L865.3 588.3Z M981.6 748.1 L985.2 756.3 L981.6 767.2 L976.1 783.5 L970.7 787.2 L965.2 781.7 L967 759.9 L974.3 758.1Z M1067.4 685.2 L1071.4 687.2 L1073.4 693.2 L1069.4 695.2 L1067.4 691.2Z M1240.7 588.5 L1244.7 593.5 L1241.7 602.6 L1239.7 608.6 L1230.6 609.7 L1226.5 612.7 L1217.5 613.7 L1210.4 614.7 L1212.4 610.7 L1220.5 606.6 L1228.6 603.6 L1236.6 596.5 L1238.6 590.5Z M1210.4 613.7 L1216.5 614.7 L1214.4 619.7 L1211.4 619.7Z M1243.7 574.4 L1250.7 578.4 L1253.8 580.4 L1248.7 584.4 L1241.7 582.4 L1239.7 585.5 L1240.7 582.4Z M1243.7 543.1 L1247.7 541.1 L1248.7 550.2 L1250.7 560.2 L1247.7 570.3 L1244.7 570.3 L1244.7 555.2Z M1185.2 640 L1187.5 640 L1186.1 648.1 L1182.5 645.4Z M1112.7 697.3 L1124.8 701.3 L1134.9 713.4 L1141 721.5 L1141 727.5 L1132.9 725.5 L1124.8 715.4 L1116.8 703.3Z M1141 729.5 L1161.1 732.5 L1181.3 735.6 L1201.5 736.6 L1191.4 738.6 L1161.1 736.6 L1145 733.5Z M1151 709.4 L1161.1 703.3 L1173.2 693.2 L1179.3 697.3 L1175.2 707.3 L1177.3 717.4 L1169.2 723.5 L1157.1 719.4 L1153.1 713.4Z M1182.8 710.3 L1189.2 708.4 L1196.6 707.5 L1194.7 710.3 L1185.5 711.2 L1192 714.9 L1185.5 716.7 L1189.2 725 L1184.6 725 L1181.8 728.7 L1180 717.6Z M1184.3 659 L1188 659.9 L1188.9 664.5 L1185.2 669.9 L1190.7 672.6 L1197 677.2 L1200.7 689.9 L1197.9 696.2 L1194.3 691.7 L1188 689 L1189.8 682.6 L1185.2 675.4 L1181.6 666.3Z M1214.1 714 L1223.3 714.9 L1224.2 721.3 L1234.4 717.2 L1244.5 720.4 L1253.7 725 L1261.1 729.6 L1262.9 731.9 L1260.2 734.2 L1266.6 739.8 L1271.2 743 L1262.9 740.7 L1256.5 737 L1248.2 739.8 L1244.5 737 L1235.3 736.1 L1239 732.4 L1233.5 728.7 L1226.1 724.1 L1220.6 722.3 L1218.7 717.6Z M1192 740.7 L1197 737.5 L1203 736 L1201 738 L1194 741Z M1181.8 735.6 L1190 735.2 L1198.4 735.3 L1196 736.8 L1188 736.8 L1182 736.8Z M1204.9 705.7 L1207 705 L1208.6 709 L1207 714 L1205.5 711Z M1206.7 720.9 L1212 721 L1215 723.6 L1209 723 L1206.7 722.5Z M1201.2 721.8 L1204 722 L1203.5 723.2 L1201.5 723Z M1264.8 729.6 L1272.2 727.8 L1275.9 725 L1277.7 726 L1274 729.6 L1268.5 731Z M1268.5 717.6 L1273 720 L1277.7 724.1 L1276.5 724.5 L1271 721Z M1282.3 727.8 L1284 728.5 L1286 732.4 L1284.5 732Z M1288 733 L1291 735 L1290 736Z M1294.5 735.5 L1299 739 L1298 740Z M1254.3 836.5 L1264.3 835.4 L1264.3 842.1 L1259.8 845.4 L1255.4 840.9Z M1316.7 852.8 L1326.2 843.3 L1333.9 835.6 L1338.7 837.5 L1333.9 843.3 L1328.2 850.9 L1322.4 855.7Z M401 527.6 L404.3 524.3 L407.7 525.4 L405.5 528.7Z M365 516 L368 515.5 L369 517 L366 517.5Z M396.5 647.5 L399 647 L401 649.2 L398.5 651 L396.5 650.5Z M390.8 643 L392 643.2 L392 645 L390.8 644.8Z M394.5 645 L397 645.6 L396.5 647 L394.5 646.5Z M386.5 641.5 L388 641.6 L388 643 L386.5 642.8Z M580 713.5 L582.5 713.5 L582.5 715.2 L580 715.2Z M792 626.5 L795 626.8 L794 628Z M798 630 L802 629.5 L801 631Z M1206 614 L1209 612.5 L1208 616Z M600.5 646.8 L609.4 644.8 L619.4 648.8 L629.3 653.7 L621.3 654.7 L614.4 649.8 L604.5 647.8Z M632.3 653.7 L639.2 654.7 L645.2 657.7 L637.2 659.7 L630.3 658.7Z M618.4 659.2 L623.3 659.2 L622.3 660.7 L619.4 660.5Z M650.1 658.7 L654.1 659.2 L652.1 660.2Z M618 633.5 L619.5 634 L619 636Z M624 640 L625.5 641 L624.5 642Z"/><path fill="#d4eafd" d="M672 512 L655.5 505.6 L651.5 508.1 L647.4 503.2 L642.6 501.6 L637.7 497.6 L631.3 495.2 L628.1 491.9 L632.9 487.1 L634.5 482.3 L629.7 476.6 L621.6 471.8 L616.8 468.5 L607.9 470.2 L606.3 472.6 L609.5 475.8 L607.1 480.6 L609.5 483.1 L603.9 487.9 L595.8 488.7 L593.4 493.5 L586.1 498.4 L578.1 500 L574.8 506.5 L571.6 514.5 L571.6 522.6 L577.6 528 L593.1 533.1 L605.8 537.4 L608.6 547.3 L612.9 551.5 L617.1 547.3 L617.1 537.4 L622.7 530.3 L621.6 530 L618.4 522.6 L620 514.5 L618.4 506.5 L626.5 506.5 L634.5 509.7 L641 512.9 L642.6 521 L647.4 522.6 L655.5 516.1 L658.7 518.5 L672 522Z M579.1 568.1 L585.2 564.1 L593.2 561.1 L601.3 566.1 L595.2 569.2 L587.2 570.2Z M591.2 572.2 L597.3 572.2 L599.3 580.2 L595.2 586.3 L592.2 582.3Z M599 572.2 L609.4 574.2 L613.4 580.2 L607.3 582.3 L603.3 578.2Z M605.3 586.3 L615.4 582.3 L625.5 576.2 L621.5 580.2 L611.4 586.3Z M617.4 578.2 L625.5 575.2 L624.5 578.2 L619.4 580.2Z M486.6 489.6 L498.3 487 L507.5 489.6 L499.7 494.8 L491.8 493.5Z M508.8 511.9 L518 506.6 L531.1 505.3 L521.9 510.6 L514.1 513.2Z M889.4 530.5 L890.4 522.5 L895.4 518.5 L891.4 512.4 L892.4 505.3 L900.5 498.3 L904.5 494.3 L910.5 492.2 L913.6 494.3 L908.5 500.3 L902.5 504.3 L903.5 512.4 L908.5 517.4 L916.6 515.4 L926.7 517.4 L916.6 520.5 L909.5 522.5 L910.5 528.5 L902.5 530.5 L900.5 538.6 L895 539 L891.3 539 L884.9 541.3 L884 536 L889 533Z M856 524.5 L866 525.4 L874 522 L876 526 L874 529 L862 529.5 L855 529Z M561.5 541.5 L563.5 542.5 L566.5 549 L567 554 L565.5 551 L560.5 543.5Z M921.6 580.8 L926.9 572.3 L931.2 569.1 L936.5 572.3 L940.8 571.3 L951.4 567 L948.2 571.3 L958.8 584 L953.5 587.2 L937.6 586.1 L921.5 589.3Z M974.1 576.3 L980.2 570.2 L990.2 568.2 L992.3 574.3 L986.2 580.3 L996.3 588.4 L994.3 602.5 L982.2 600.5 L980.2 592.4 L976.1 584.4Z"/><path fill="#4384ae" d="M595.8 491.1 L602.3 495.2 L611.9 500 L608.7 501.6 L599 502.4 L594.2 500Z M584.5 460.5 L588.5 453.2 L596.6 450.8 L610.3 450.8 L621.6 453.2 L623.2 457.3 L629.7 460.5 L636.1 463.7 L647.4 468.5 L649.8 474.2 L654.7 479.8 L666.8 487.1 L660.3 493.5 L650.6 488.7 L647.4 490.3 L656.3 501.6 L655.5 505.6 L651.5 508.1 L647.4 503.2 L642.6 501.6 L637.7 497.6 L631.3 495.2 L628.1 491.9 L632.9 487.1 L634.5 482.3 L629.7 476.6 L621.6 471.8 L616.8 468.5 L607.9 470.2 L597.4 470.2 L587.7 466.1Z M672.1 552.9 L679.2 551.5 L682 555.7 L689.1 564.2 L687.7 567 L679.2 564.2 L673.5 564.2Z"/></g><g id="pins"><path d="M551.6 582 C546.5 573.5 537 567 537 556.4 A14.6 14.6 0 0 1 566.2 556.4 C566.2 567 556.7 573.5 551.6 582Z" fill="#1a3d7c"/><circle cx="551.5" cy="557.2" r="9.8" fill="#e2731f"/><circle cx="551.5" cy="557.2" r="7.25" fill="#86b04a"/>
<path d="M873.5 559.9 C869.5 553 862.05 548.5 862.05 539.6 A11.45 11.45 0 0 1 884.95 539.6 C884.95 548.5 877.5 553 873.5 559.9Z" fill="#1a3d7c"/><circle cx="873.6" cy="540" r="7.7" fill="#e2731f"/><circle cx="873.6" cy="540" r="5.55" fill="#b0324a"/>
</g></svg>
</div>
<div class="bx" style="left:1345px;top:935px;width:26px;height:24px;border:1px solid #b8b8b8;background:#cfcfcf"></div>
<svg style="left:1349px;top:938px" width="18" height="18"><circle cx="9" cy="9" r="6.5" fill="#e2e2e2" stroke="#bdbdbd" stroke-width="1"/><rect x="5" y="8" width="8" height="2.2" fill="#bdbdbd"/></svg>
<div class="bx" style="left:1378px;top:935px;width:26px;height:24px;border:1px solid #adadad;background:#e8e8e8"></div>
<svg style="left:1382px;top:938px" width="18" height="18"><circle cx="9" cy="9" r="7" fill="#3aa53a"/><circle cx="9" cy="9" r="6" fill="#5cc45c"/><rect x="5" y="7.8" width="8" height="2.6" fill="#fff"/><rect x="7.7" y="5" width="2.6" height="8" fill="#fff"/></svg>

<!-- STATUS -->
<div class="a" style="left:879px;top:966px;width:1px;height:20px;background:#a0a0a0"></div>
<svg style="left:1124px;top:970px" width="4" height="16"><g fill="#c4baa4"><rect x="1" y="1" width="2" height="2"/><rect x="1" y="5" width="2" height="2"/><rect x="1" y="9" width="2" height="2"/><rect x="1" y="13" width="2" height="2"/></g></svg>

</body></html>
